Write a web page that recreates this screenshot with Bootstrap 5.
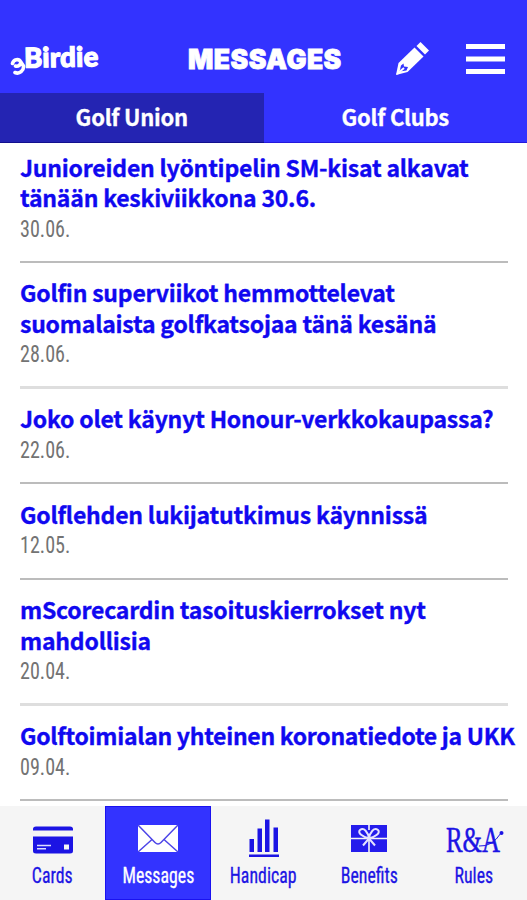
<!DOCTYPE html>
<html lang="fi">
<head>
<meta charset="utf-8">
<meta name="viewport" content="width=device-width, initial-scale=1">
<title>Birdie – Messages</title>
<link rel="stylesheet" href="https://cdn.jsdelivr.net/npm/bootstrap@5.3.0/dist/css/bootstrap.min.css">
<style>
:root { --brand: #3333ff; --ink: #1008f0; }
body { background: #fff; font-family: Roboto, sans-serif; }
.app { height: 900px; }
.topbar { background: var(--brand); height: 93px; padding: 25px 22px 0 9px; }
.side-left { width: 179px; }
.logo-tail { margin: 14px -2px 0 1px; }
.brand-word { font: 900 27.5px/1 Lato, sans-serif; letter-spacing: .3px; transform: rotate(-1deg); -webkit-text-stroke: 1.2px #fff; padding-bottom: 5px; }
.page-title { font: 900 26.5px/1 Inter, sans-serif; letter-spacing: .5px; -webkit-text-stroke: .8px #fff; }
.actions { gap: 35px; }
.tabs .nav-link { height: 50px; color: #fff; background: var(--brand); border-radius: 0; border-bottom: 1px solid #2418dc;
  font: 700 22px/47px "Noto Sans CJK SC", sans-serif; letter-spacing: -.25px; padding: 0; -webkit-text-stroke: .3px; }
.tabs .nav-link.active { background: #2424b2; border-color: #12108e; }
.messages { padding: 0 19px 0 20px; }
.msg { padding: 14.5px 0 16.9px; border-bottom: 2px solid #bcbcbc; }
.msg:first-child { padding-top: 8.8px; padding-bottom: 16.4px; }
.msg.pale { border-bottom: 3px solid #dedede; padding-bottom: 16px; }
.msg h2 { font: 700 23px/30.4px "Noto Sans CJK SC", sans-serif; letter-spacing: -.21px; color: var(--ink); white-space: nowrap; font-variant-ligatures: none; -webkit-text-stroke: .35px; }
.msg h2.tight { letter-spacing: -.29px; }
.msg time { font: 400 24.5px/30.4px Roboto, sans-serif; font-stretch: 75%; color: #737373; transform: scaleX(.82); transform-origin: left; padding-top: 1.3px; }
.tabbar { background: #f5f5f5; height: 94px; }
.tabbar .nav-link { padding: 9px 0 0; color: #1c14e4; border-radius: 0; }
.tabbar .nav-link.active { background: var(--brand); color: #fff; box-shadow: inset 0 0 0 1px #1a12f0; }
.tabbar .cap { font: 400 22px/26px Roboto, sans-serif; font-stretch: 75%; transform: scaleX(.81); -webkit-text-stroke: .3px; }
.ra { font: 400 36px/1 "Liberation Serif", serif; }
</style>
</head>
<body>
<div class="app d-flex flex-column overflow-hidden">
  <header class="topbar d-flex align-items-center text-white">
    <div class="side-left d-flex align-items-center flex-shrink-0">
      <svg class="logo-tail" width="16" height="19" viewBox="0 0 16 19" fill="none" stroke="#fff" stroke-width="3.6" stroke-linecap="round" stroke-linejoin="round"><path d="M2.500 6.500C3.500 2 9 1.500 10.500 4.500C11.500 7.500 8 10 5.500 9M10.500 4.500L13.500 9C14 13.500 9.500 17.500 5 15.500"/></svg>
      <span class="brand-word">Birdie</span>
    </div>
    <h1 class="page-title m-0">MESSAGES</h1>
    <div class="actions d-flex align-items-center justify-content-end ms-auto">
      <svg width="36" height="36" viewBox="0 0 36 36" fill="#fff"><path d="M1 34L3.500 22L19.500 6.500L28.500 15.500L12.500 31Z"/><path d="M21.500 5L25.500 1L34 9.500L30 13.500Z"/><path d="M4.500 30.500L6 24.500L8.500 22.500L9 25.500L13 26L11.500 29.500Z" fill="#3333ff"/><path d="M2 33L9 27" stroke="#fff" stroke-width="2"/></svg>
      <svg width="39" height="31" viewBox="0 0 39 31" fill="#fff"><path d="M0 0H39V5H0ZM0 12.500H39V17.500H0ZM0 25H39V30H0Z"/></svg>
    </div>
  </header>
  <nav class="tabs nav nav-fill flex-nowrap">
    <a class="nav-link active w-50" href="#">Golf Union</a>
    <a class="nav-link w-50" href="#">Golf Clubs</a>
  </nav>
  <main class="messages flex-grow-1 overflow-hidden">
    <article class="msg"><h2 class="m-0">Junioreiden lyöntipelin SM-kisat alkavat<br>tänään keskiviikkona 30.6.</h2><time class="d-block">30.06.</time></article>
    <article class="msg pale"><h2 class="m-0">Golfin superviikot hemmottelevat<br>suomalaista golfkatsojaa tänä kesänä</h2><time class="d-block">28.06.</time></article>
    <article class="msg"><h2 class="m-0">Joko olet käynyt Honour-verkkokaupassa?</h2><time class="d-block">22.06.</time></article>
    <article class="msg"><h2 class="m-0">Golflehden lukijatutkimus käynnissä</h2><time class="d-block">12.05.</time></article>
    <article class="msg pale"><h2 class="m-0">mScorecardin tasoituskierrokset nyt<br>mahdollisia</h2><time class="d-block">20.04.</time></article>
    <article class="msg"><h2 class="m-0 tight">Golftoimialan yhteinen koronatiedote ja UKK</h2><time class="d-block">09.04.</time></article>
  </main>
  <nav class="tabbar nav nav-justified flex-nowrap flex-shrink-0">
    <a class="nav-link d-flex flex-column align-items-center" href="#">
      <svg width="42" height="48" viewBox="0 0 42 48" fill="currentColor"><path d="M1 15.500V14Q1 11.500 4 11.500H38Q41 11.500 41 14V15.500ZM1 21.500H41V36Q41 38.500 38 38.500H4Q1 38.500 1 36Z"/><path d="M5 30.500H19M5 33.800H14" stroke="#dedeff" stroke-width="1.5"/><path d="M32 29.500H37V34.500H32Z" fill="#f5f5f5"/></svg>
      <span class="cap">Cards</span></a>
    <a class="nav-link active d-flex flex-column align-items-center" href="#">
      <svg width="42" height="48" viewBox="0 0 42 48"><path d="M1 10H41V37H1Z" fill="#fff"/><path d="M1 10L18 27.500Q21 30.500 24 27.500L41 10M1 37L15 24.500M41 37L27 24.500" fill="none" stroke="#4d45e8" stroke-width="1.5"/></svg>
      <span class="cap">Messages</span></a>
    <a class="nav-link d-flex flex-column align-items-center" href="#">
      <svg width="42" height="48" viewBox="0 0 42 48" fill="currentColor"><path d="M6.500 24H11V37H6.500ZM14.500 13.500H19V37H14.500ZM22 4.500H26.500V37H22ZM30.500 12.500H35V37H30.500ZM6 39.500H36V42H6Z"/></svg>
      <span class="cap">Handicap</span></a>
    <a class="nav-link d-flex flex-column align-items-center" href="#">
      <svg width="42" height="48" viewBox="0 0 42 48"><path d="M3 10H39V37H3Z" fill="#241cec"/><path d="M3 23.500H39M21 10V15M21 25V37" stroke="#f5f5f5" stroke-width="1.6"/><path d="M21 23.500C15 22 9 18 12 15C16 12 20 17 21 23.500C22 17 26 12 30 15C33 18 27 22 21 23.500L15 30.500M21 23.500L27 30.500" fill="none" stroke="#e4e2ff" stroke-width="2"/></svg>
      <span class="cap">Benefits</span></a>
    <a class="nav-link d-flex flex-column align-items-center" href="#">
      <svg width="62" height="48" viewBox="0 0 62 48" fill="currentColor" class="ra"><text x="3" y="36.500" textLength="54" lengthAdjust="spacingAndGlyphs" stroke="currentColor" stroke-width=".5">R&amp;A</text><circle cx="58.500" cy="18" r="2"/><path d="M36 31Q49 32 58 18" fill="none" stroke="currentColor" stroke-width="1"/></svg>
      <span class="cap">Rules</span></a>
  </nav>
</div>
<script src="https://cdn.jsdelivr.net/npm/bootstrap@5.3.0/dist/js/bootstrap.bundle.min.js"></script>
</body>
</html>
